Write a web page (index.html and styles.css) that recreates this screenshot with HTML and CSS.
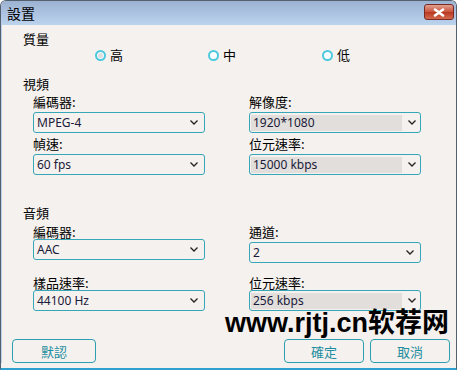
FILE: index.html
```html
<!DOCTYPE html>
<html lang="zh-Hant">
<head>
  <meta charset="UTF-8" />
  <title>設置</title>
  <link rel="stylesheet" href="styles.css">
</head>
<body>
  <div class="window">
    <div class="titlebar">
      <span class="title">設置</span>
      <div class="close">
        <svg width="14" height="9" viewBox="0 0 14 9"><path d="M3 1.5 L11 7.5 M11 1.5 L3 7.5" stroke="#fff" stroke-width="2.6" stroke-linecap="round"/></svg>
      </div>
    </div>

    <div class="client">
      <div class="heading">質量</div>
      <div class="radios">
        <div class="radio"><span class="dot checked"></span>高</div>
        <div class="radio"><span class="dot"></span>中</div>
        <div class="radio"><span class="dot"></span>低</div>
      </div>

      <div class="heading video">視頻</div>
      <div class="grid video-grid">
        <div class="field">
          <label>編碼器:</label>
          <div class="select"><span class="value">MPEG-4</span><svg class="chev" width="8" height="5" viewBox="0 0 8 5"><path d="M0.5 0.5 L4 4 L7.5 0.5" fill="none" stroke="#222" stroke-width="1.3"/></svg></div>
        </div>
        <div class="field">
          <label>解像度:</label>
          <div class="select readonly"><span class="value">1920*1080</span><svg class="chev" width="8" height="5" viewBox="0 0 8 5"><path d="M0.5 0.5 L4 4 L7.5 0.5" fill="none" stroke="#222" stroke-width="1.3"/></svg></div>
        </div>
        <div class="field">
          <label>幀速:</label>
          <div class="select"><span class="value">60 fps</span><svg class="chev" width="8" height="5" viewBox="0 0 8 5"><path d="M0.5 0.5 L4 4 L7.5 0.5" fill="none" stroke="#222" stroke-width="1.3"/></svg></div>
        </div>
        <div class="field">
          <label>位元速率:</label>
          <div class="select readonly"><span class="value">15000 kbps</span><svg class="chev" width="8" height="5" viewBox="0 0 8 5"><path d="M0.5 0.5 L4 4 L7.5 0.5" fill="none" stroke="#222" stroke-width="1.3"/></svg></div>
        </div>
      </div>

      <div class="heading audio">音頻</div>
      <div class="grid audio-grid">
        <div class="field">
          <label>編碼器:</label>
          <div class="select"><span class="value">AAC</span><svg class="chev" width="8" height="5" viewBox="0 0 8 5"><path d="M0.5 0.5 L4 4 L7.5 0.5" fill="none" stroke="#222" stroke-width="1.3"/></svg></div>
        </div>
        <div class="field shifted">
          <label>通道:</label>
          <div class="select"><span class="value">2</span><svg class="chev" width="8" height="5" viewBox="0 0 8 5"><path d="M0.5 0.5 L4 4 L7.5 0.5" fill="none" stroke="#222" stroke-width="1.3"/></svg></div>
        </div>
        <div class="field">
          <label>樣品速率:</label>
          <div class="select"><span class="value">44100 Hz</span><svg class="chev" width="8" height="5" viewBox="0 0 8 5"><path d="M0.5 0.5 L4 4 L7.5 0.5" fill="none" stroke="#222" stroke-width="1.3"/></svg></div>
        </div>
        <div class="field">
          <label>位元速率:</label>
          <div class="select readonly"><span class="value">256 kbps</span><svg class="chev" width="8" height="5" viewBox="0 0 8 5"><path d="M0.5 0.5 L4 4 L7.5 0.5" fill="none" stroke="#222" stroke-width="1.3"/></svg></div>
        </div>
      </div>

      <div class="buttons">
        <button class="btn">默認</button>
        <div class="spacer"></div>
        <button class="btn">確定</button>
        <button class="btn">取消</button>
      </div>

      <div class="watermark">www.rjtj.cn软荐网</div>
    </div>
  </div>
</body>
</html>
```

FILE: styles.css
```css
* {
  box-sizing: border-box;
}

body {
  margin: 0;
  background: #fff;
  font-family: "Noto Sans", "Noto Sans CJK TC", sans-serif;
}

.window {
  width: 457px;
  height: 370px;
  background: #f5f1ee;
  border: 1px solid #55606e;
  border-bottom: 2px solid #2f9fcf;
  border-radius: 6px 6px 0 0;
  position: relative;
  overflow: hidden;
}

.titlebar {
  height: 24px;
  background: linear-gradient(#9cb2d2, #bcd3ee);
  display: flex;
  align-items: center;
  justify-content: space-between;
  padding: 0 2px 0 6px;
}

.title {
  font-family: "Noto Sans CJK TC", sans-serif;
  font-size: 14px;
  color: #000;
}

.close {
  width: 30px;
  height: 16px;
  margin-top: -2px;
  border: 1px solid #7a2a22;
  border-radius: 3px;
  background: linear-gradient(#e2a090, #c8533c 50%, #b8381f 51%, #d26a50);
  display: flex;
  align-items: center;
  justify-content: center;
}

.client {
  padding: 6px 0 0 21px;
  border-left: 1px solid #b9d0ea;
}

.heading {
  font-family: "Noto Sans CJK TC", sans-serif;
  font-size: 13px;
  line-height: 16px;
  color: #000;
}

.heading.video {
  margin-top: 13px;
}

.heading.audio {
  margin-top: 30px;
}

.radios {
  display: grid;
  grid-template-columns: 113px 114px auto;
  margin-left: 72px;
  height: 16px;
}

.radio {
  display: flex;
  align-items: center;
  gap: 4px;
  font-family: "Noto Sans CJK TC", sans-serif;
  font-size: 13px;
  line-height: 16px;
}

.dot {
  width: 11px;
  height: 11px;
  border: 2px solid #4cc9de;
  border-radius: 50%;
  background: #fff;
}

.dot.checked {
  background: #ddd;
  box-shadow: inset 0 0 0 1px #fff;
}

.grid {
  display: grid;
  grid-template-columns: 172px 172px;
  column-gap: 44px;
  margin-left: 10px;
}

.video-grid {
  margin-top: 2px;
  row-gap: 3px;
}

.audio-grid {
  margin-top: 3px;
  row-gap: 12px;
}

.field label {
  display: block;
  height: 15px;
  font-family: "Noto Sans CJK TC", sans-serif;
  font-size: 13px;
  line-height: 15px;
  color: #000;
}

.video-grid .field label {
  margin-bottom: 3px;
}

.field.shifted .select {
  margin-top: 3px;
}

.select {
  height: 21px;
  border: 1px solid #37a6b6;
  border-radius: 3px;
  background: #f5f1ee;
  display: flex;
  align-items: center;
  padding: 0 6px 0 2px;
}

.select .value {
  flex: 1;
  font-size: 12px;
  line-height: 16px;
  color: #1a1a3a;
  padding-left: 1px;
}

.select.readonly {
  padding: 0 5px 0 1px;
}

.select.readonly .value {
  flex: 0 0 151px;
  background: #e1dedb;
  padding-left: 2px;
  margin-right: 6px;
}

.select .chev {
  flex-shrink: 0;
  margin-left: auto;
}

.buttons {
  display: flex;
  gap: 6px;
  margin-top: 28px;
  margin-left: -11px;
}

.spacer {
  flex: 0 0 176px;
}

.btn {
  width: 80px;
  height: 24px;
  border: 1px solid #2e9fb0;
  border-radius: 4px;
  background: #f5f1ee;
  font-family: "Noto Sans CJK TC", sans-serif;
  font-size: 13px;
  color: #1f8ea0;
  padding: 0;
}

.btn:first-child {
  width: 84px;
}

.watermark {
  position: absolute;
  left: 224px;
  top: 300px;
  font-family: "Liberation Sans", "Noto Sans CJK SC", sans-serif;
  font-weight: bold;
  font-size: 27px;
  color: #000;
  white-space: nowrap;
}
```
